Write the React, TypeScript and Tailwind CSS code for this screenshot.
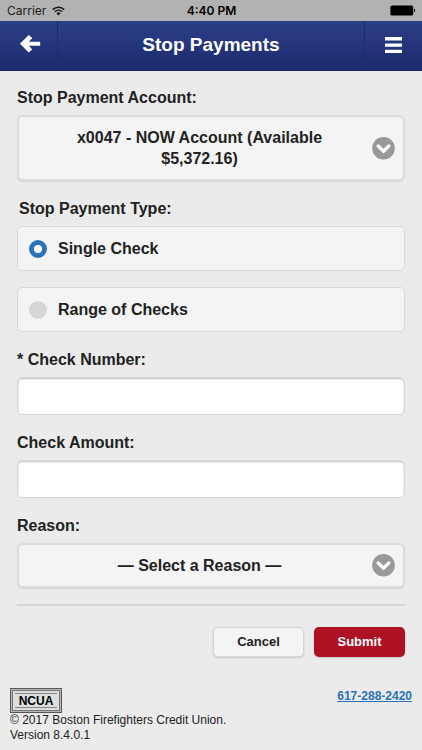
import { useState } from "react";

type SelectBoxProps = {
  id: string;
  options: string[];
  className: string;
};

function SelectBox({ id, options, className }: SelectBoxProps) {
  const [value, setValue] = useState(options[0]);

  return (
    <div className={`relative flex items-center rounded-md border-2 border-[#dcdcdc] bg-[#f4f4f4] pl-2 shadow-[0_1px_1px_rgba(0,0,0,0.1)] ${className}`}>
      <span className="flex-1 px-6 text-center leading-[21px]" aria-hidden="true">{value}</span>
      <svg className="mr-2 size-[23px] shrink-0" viewBox="0 0 23 23" aria-hidden="true">
        <circle cx="11.5" cy="11.3" r="11.3" fill="#999999" />
        <path d="M6.2 9 L11.5 14.1 L16.8 9" fill="none" stroke="#fff" strokeWidth="3.4" strokeLinecap="round" />
      </svg>
      {/* the native control sits on top so the label text can wrap */}
      <select
        id={id}
        value={value}
        onChange={(e) => setValue(e.target.value)}
        className="absolute inset-0 size-full cursor-pointer opacity-0"
      >
        {options.map((o) => (
          <option key={o}>{o}</option>
        ))}
      </select>
    </div>
  );
}

function StatusBar() {
  return (
    <div className="grid h-[21px] grid-cols-3 items-center bg-[#b2b2b2] pr-1.5 pl-[7px] font-['Inter',sans-serif] text-xs text-black">
      <div className="flex items-center gap-1.5 text-[#222]">
        <span>Carrier</span>
        <svg className="h-[10px] w-[13px]" viewBox="0 0 13 10" aria-hidden="true">
          <path d="M0.8 3.6 A8.2 8.2 0 0 1 12.2 3.6" fill="none" stroke="#111" strokeWidth="1.6" />
          <path d="M2.9 5.8 A5.2 5.2 0 0 1 10.1 5.8" fill="none" stroke="#111" strokeWidth="1.5" />
          <path d="M6.5 9.6 L4.4 7.4 A3 3 0 0 1 8.6 7.4 Z" fill="#111" />
        </svg>
      </div>
      <span className="text-center font-semibold">4:40 PM</span>
      <svg className="h-[11px] w-[26px] justify-self-end" viewBox="0 0 26 11" aria-hidden="true">
        <rect x="0.4" y="0.4" width="22.8" height="10.2" rx="1.6" fill="#000" />
        <path d="M24 3.8 C25.6 4.2 25.6 6.8 24 7.2 Z" fill="#000" />
      </svg>
    </div>
  );
}

function Header() {
  return (
    <header className="grid h-[50px] grid-cols-[58px_1fr_58px] border-b border-[#182768] bg-linear-to-b from-[#2b3e86] to-[#1d2b6f] text-white">
      <button type="button" aria-label="Back" className="flex items-center justify-center border-r border-[#1b2b70]">
        <svg className="mb-1 ml-1 h-[18px] w-[21px]" viewBox="0 0 21 18" aria-hidden="true">
          <path d="M0 8.7 L8.7 0 L12.2 3 L9 6.7 H20.2 V10.7 H9 L12.2 14.4 L8.7 17.4 Z" fill="#fff" />
        </svg>
      </button>
      <h1 className="self-center pb-0.5 text-center text-[19px] leading-6 font-bold">Stop Payments</h1>
      <button type="button" aria-label="Menu" className="flex items-center justify-center border-l border-[#1b2b70]">
        <svg className="mb-px h-4 w-[17px]" viewBox="0 0 17 16" aria-hidden="true">
          <path d="M0 0 H17 V3.4 H0 Z M0 6.4 H17 V9.8 H0 Z M0 12.8 H17 V16 H0 Z" fill="#fff" />
        </svg>
      </button>
    </header>
  );
}

function RadioRow({ label, checked, onChange }: { label: string; checked: boolean; onChange: () => void }) {
  return (
    <label className="flex h-[45px] items-center gap-[11px] rounded-[5px] border border-[#d9d9d9] bg-[#f4f4f4] pl-[11px]">
      <input
        type="radio"
        name="stop-type"
        checked={checked}
        onChange={onChange}
        className="size-[18px] appearance-none rounded-full bg-[#d6d6d6] checked:border-5 checked:border-[#2a72ba] checked:bg-white"
      />
      <span>{label}</span>
    </label>
  );
}

function TextField({ id, label }: { id: string; label: string }) {
  return (
    <div>
      <label htmlFor={id} className="mb-[5px] block">{label}</label>
      <input
        id={id}
        type="text"
        className="block h-[38px] w-full rounded-[5px] border border-[#d6d6d6] bg-white px-2 shadow-[inset_0_1px_2px_rgba(0,0,0,0.25)]"
      />
    </div>
  );
}

function NcuaBadge() {
  return (
    <div className="w-[52px] border border-[#555] bg-[#b8b8b8] p-px">
      <div className="flex h-[21px] flex-col justify-between border border-[#777] bg-[#dedede] px-0.5 py-0.5">
        <span className="h-px bg-[#888]" />
        <span className="text-center text-xs leading-3 font-black text-black">NCUA</span>
        <span className="h-px bg-[#888]" />
      </div>
    </div>
  );
}

export default function App() {
  const [type, setType] = useState("single");

  return (
    <div className="min-h-screen bg-[#ebebeb] font-['Liberation_Sans',Arial,sans-serif] text-[#222]">
      <StatusBar />
      <Header />

      <form className="flex flex-col gap-4 px-[17px] pt-[15px] text-base font-bold" onSubmit={(e) => e.preventDefault()}>
        <div>
          <label htmlFor="account" className="mb-[5px] block">Stop Payment Account:</label>
          <SelectBox id="account" options={["x0047 - NOW Account (Available $5,372.16)"]} className="min-h-[66px]" />
        </div>

        <fieldset>
          <legend className="mb-[5px] pl-0.5">Stop Payment Type:</legend>
          <div className="flex flex-col gap-4">
            <RadioRow label="Single Check" checked={type === "single"} onChange={() => setType("single")} />
            <RadioRow label="Range of Checks" checked={type === "range"} onChange={() => setType("range")} />
          </div>
        </fieldset>

        <TextField id="check-number" label="* Check Number:" />
        <TextField id="check-amount" label="Check Amount:" />

        <div>
          <label htmlFor="reason" className="mb-[5px] block">Reason:</label>
          <SelectBox id="reason" options={["— Select a Reason —"]} className="min-h-[45px]" />
        </div>

        <hr className="border-t-2 border-[#d6d6d6]" />

        <div className="flex justify-end gap-2.5 pt-[5px] text-[13px]">
          <button type="button" className="h-[30px] w-[91px] rounded-[5px] border border-[#d6d6d6] bg-[#f4f4f4] shadow-[0_1px_2px_rgba(0,0,0,0.15)]">
            Cancel
          </button>
          <button type="submit" className="h-[30px] w-[91px] rounded-[5px] bg-[#ae1124] text-white shadow-[0_1px_2px_rgba(0,0,0,0.15)]">
            Submit
          </button>
        </div>
      </form>

      <footer className="flex items-start justify-between px-2.5 pt-[31px] text-xs leading-[15px]">
        <div>
          <NcuaBadge />
          <p>© 2017 Boston Firefighters Credit Union.</p>
          <p>Version 8.4.0.1</p>
        </div>
        <a href="tel:617-288-2420" className="pt-px font-bold text-[#2a72ba] underline">617-288-2420</a>
      </footer>
    </div>
  );
}
